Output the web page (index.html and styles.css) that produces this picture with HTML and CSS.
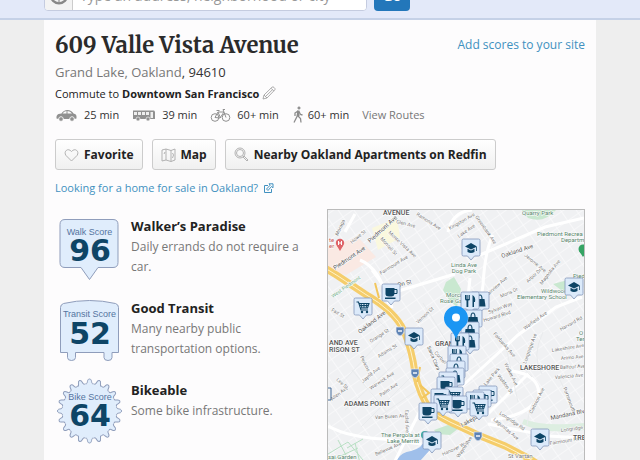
FILE: index.html
```html
<!DOCTYPE html>
<html lang="en">
<head>
<meta charset="utf-8">
<meta name="viewport" content="width=device-width, initial-scale=1">
<title>609 Valle Vista Avenue</title>
<link rel="stylesheet" href="styles.css">
</head>
<body>
<header class="topbar">
  <form class="search">
    <div class="field">
      <button class="locate" type="button" aria-label="Use my location">
        <svg width="20" height="20" viewBox="0 0 18 18" fill="none" stroke="#888" stroke-width="2"><circle cx="9" cy="9" r="7.5"/><path d="M9 2v4M9 12v4M2 9h4M12 9h4" stroke-width="1"/></svg>
      </button>
      <input class="query" type="text" aria-label="Location" placeholder="Type an address, neighborhood or city">
    </div>
    <button class="go" type="submit">Go</button>
  </form>
</header>
<main class="page">
  <div class="heading">
    <h1>609 Valle Vista Avenue</h1>
    <a class="link" href="#">Add scores to your site</a>
  </div>
  <p class="place"><a href="#">Grand Lake, Oakland</a>, 94610</p>
  <p class="commute">Commute to <b>Downtown San Francisco</b>
    <svg width="14" height="14" viewBox="0 0 14 14" fill="none" stroke="#999" stroke-width=".8"><path d="M1 13l1-4L10 1.200q1-.8 2 .2l.8.900q.7.900-.1 1.700L5 12z M2 9l3 3M9 2.200l2.900 2.900M3.500 10.500L10.500 3.700"/></svg>
  </p>
  <ul class="times">
    <li><svg width="23" height="14" viewBox="0 0 22 14"><path fill="#909090" d="M1 10.500Q.5 7 3 6l3-.5Q8 2 12 2q4 0 6 3.500 3 .5 3 3v2l-2 .5a2.500 2.500 0 0 0-5 0H8a2.500 2.500 0 0 0-5 0z"/><path fill="#fbfbfb" d="M7 5.500Q8.500 3 11 3v2.500zM12 3q3 0 4.500 2.500H12z"/><g fill="#909090" stroke="#fbfbfb" stroke-width=".6"><circle cx="5.500" cy="11" r="2.200"/><circle cx="16.500" cy="11" r="2.200"/></g></svg>25 min</li>
    <li><svg width="24" height="14" viewBox="0 0 24 14"><path fill="#909090" d="M1 2.500h21l1 1V11H1z"/><path fill="#eee" d="M2 4h3v3H2zM6 4h3v3H6zM10 4h3v3h-3zM14 4h3v3h-3zM18.500 4H21v6h-2.500z"/><g fill="#909090" stroke="#fff" stroke-width=".6"><circle cx="6" cy="11" r="2"/><circle cx="16" cy="11" r="2"/></g></svg>39 min</li>
    <li><svg width="21" height="14" viewBox="0 0 21 14" fill="none" stroke="#909090"><circle cx="5" cy="9.500" r="3.800"/><circle cx="16" cy="9.500" r="3.800"/><path d="M5 9.500l3-5.500h6l-4 6zM8 4l2.500 6M16 9.500L13 1.500h2M6.500 2.500h3"/></svg>60+ min</li>
    <li class="walk"><svg width="12" height="18" viewBox="0 0 12 18" fill="none" stroke="#8c8c8c" stroke-width="1.300"><circle cx="7" cy="2" r="1.100" fill="#8c8c8c" stroke-width="1"/><path d="M6 5L5 10.500 2 16.500M6 10l2.500 2.500.5 4M6 5L3 7v3M7 5.500L8.500 8.500l2 .5"/><path d="M6.300 4.500v5.500" stroke-width="2.400"/></svg>60+ min</li>
    <li><a href="#">View Routes</a></li>
  </ul>
  <div class="actions">
    <button type="button"><svg width="15" height="14" viewBox="0 0 15 14" fill="none" stroke="#aaa" stroke-width=".9"><path d="M7.500 13L2 7.500C-.8 4 3.500-1 7.500 3.500 11.500-1 15.800 4 13 7.500z"/></svg>Favorite</button>
    <button type="button"><svg width="15" height="14" viewBox="0 0 15 14" fill="none" stroke="#aaa" stroke-width=".9"><path d="M1 2l4-1v11l-4 1zM5 1l5 1.500v11L5 12M10 2.500l4-1.500v11l-4 1.500M3 6l1-2M11.500 5l1 2-1 3"/></svg>Map</button>
    <button type="button"><svg width="15" height="15" viewBox="0 0 15 15" fill="none" stroke="#aaa" stroke-width=".9"><circle cx="6" cy="6" r="5"/><circle cx="6" cy="6" r="3.500"/><path d="M9 10l1-1 4 4-1 1z"/></svg>Nearby Oakland Apartments on Redfin</button>
  </div>
  <p class="sale"><a class="link" href="#">Looking for a home for sale in Oakland?
    <svg width="11" height="11" viewBox="0 0 11 11" fill="none" stroke="#4191c0"><path d="M5 2.500H1.500v7h7V6M6 .8h4v4L8.500 3.500 5 7.500 3.500 6 7.200 2.200z"/></svg></a></p>
  <div class="columns">
    <section class="scores">
      <article>
        <svg class="badge" width="70" height="72" viewBox="55 212 70 72"><path d="M65 219.500h48q5 0 5 5v38q0 5-5 5h-15L89.500 279.500 81 267.500H65q-5 0-5-5v-38q0-5 5-5z"/><text class="kind" x="89.500" y="235">Walk Score</text><text class="value" x="90" y="261">96</text></svg>
        <div><h2>Walker’s Paradise</h2><p>Daily errands do not require a car.</p></div>
      </article>
      <article>
        <svg class="badge" width="70" height="72" viewBox="55 294 70 72"><path d="M60.500 352.500v-45q0-3 3-4 26-6 52 0 3 1 3 4v45h-6.500v5q0 3-4 3t-4-3v-5h-28.500v5q0 3-4 3t-4-3v-5z"/><text class="kind" x="89.500" y="317">Transit Score</text><text class="value" x="90" y="344">52</text></svg>
        <div><h2>Good Transit</h2><p>Many nearby public transportation options.</p></div>
      </article>
      <article>
        <svg class="badge" width="70" height="72" viewBox="55 376 70 72">
          <defs><path id="tooth" d="M-4.100-27.200C-1-26.500-3.200-32 0-32S1-26.500 4.100-27.200"/><g id="teeth"><use href="#tooth"/><use href="#tooth" transform="rotate(18)"/><use href="#tooth" transform="rotate(36)"/><use href="#tooth" transform="rotate(54)"/><use href="#tooth" transform="rotate(72)"/></g></defs>
          <g transform="translate(89.500 411)"><circle r="27.500" class="disc"/><use href="#teeth"/><use href="#teeth" transform="rotate(90)"/><use href="#teeth" transform="rotate(180)"/><use href="#teeth" transform="rotate(270)"/></g>
          <text class="kind" x="90" y="400">Bike Score</text><text class="value" x="90" y="426">64</text></svg>
        <div><h2>Bikeable</h2><p>Some bike infrastructure.</p></div>
      </article>
    </section>
    <svg class="map" viewBox="328 210 256 260" preserveAspectRatio="xMidYMin slice" role="img" aria-label="Map of the neighborhood">
      <defs>
        <pattern id="blocks" width="13" height="11" patternUnits="userSpaceOnUse" patternTransform="rotate(-35)"><path d="M0 0H13M0 0V11" stroke="#fafafb" stroke-width="1.600"/></pattern>
        <g id="pin"><path d="M-7.500-9H7.500Q9-9 9-7.500V6.500Q9 8 7.500 8H3.500L0 12-3.500 8H-7.500Q-9 8-9 6.500V-7.500Q-9-9-7.500-9z" fill="#dceafa" stroke="#8397ba" stroke-width=".8"/></g>
        <g id="school"><use href="#pin"/><path d="M-6-1.500L0-5 6-1.500 0 1.500z M-3.500.8L0 2.600 3.500.8V4Q0 6-3.500 4z M5-1h.8v4H5z" fill="#0e4566"/></g>
        <g id="cup"><use href="#pin"/><path d="M-5.500-5H3.500V1Q3 3.500.5 3.500H-2Q-5.500 3.500-5.500 1zM-6 4.500H4.500V6H-6z" fill="#0e4566"/><path d="M3-3.500h3v4H3" fill="none" stroke="#0e4566"/></g>
        <g id="cart"><use href="#pin"/><path d="M-6.500-5h2L-2 3H5M-4-3.500H6L4.500 1h-7M-2-3.500l1 4.500M1-3.500V1M4-3.500L3 1M-3.500-1.500h9" fill="none" stroke="#0e4566" stroke-width="1.100"/><circle cx="-1" cy="5" r="1.200" fill="#0e4566"/><circle cx="4" cy="5" r="1.200" fill="#0e4566"/></g>
        <g id="food"><use href="#pin"/><path d="M-5-6v4q0 1.500 1.500 1.500V6h1.800V-.5Q0-.5 0-2v-4h-.8v4h-.8v-4h-1v4h-.8v-4zM2.500-6Q6-4 5 1H4v5H2.500z" fill="#0e4566"/></g>
        <g id="bag"><use href="#pin"/><path d="M-4.500-2h9L5.500 5.500h-11z" fill="#0e4566"/><path d="M-2-2q0-4 2-4t2 4" fill="none" stroke="#0e4566" stroke-width="1.100"/></g>
        <g id="shield"><path d="M-4-4H4V1Q3 4 0 5-3 4-4 1z" fill="#5e83b5" stroke="#e9eef5" stroke-width=".7"/><path d="M-2 0h4" stroke="#fff" stroke-width="1.400"/></g>
      </defs>
      <rect x="320" y="200" width="280" height="290" fill="#f0f1f3"/>
      <rect x="320" y="200" width="280" height="290" fill="url(#blocks)"/>
      <path d="M328 247l30-10 18 20-30 18-18-5z" fill="#fae9e3"/>
      <path d="M372 228l25-10 3 20-22 12z" fill="#faf8de"/>
      <g fill="#c9e8d0"><path d="M446 282l8-5 7 12-4 18-8-7-6-10zM522 210h34q-12 14-28 8zM553 284l22-6 5 11-15 4zM434 430l14-5 11 3-9 7-13-1z"/><path d="M524 419q18 8 60 4v7q-40 5-62-6z" fill="#ddeee1"/></g>
      <path d="M396 461q5-9 15-10 12-3 14-12l4-3 7 5-7 10-9 10z" fill="#9fbfea"/>
      <g fill="none" stroke="#fff" stroke-width="3"><path d="M328 426q20 11 55 13l38 5M360 260q20 8 29 44M395 292l60-18M448 232q4-20 24-22M470 278l-4 38M493 235q-8 15-10 50-6 40-5 60M480 255l65-28 39-9M458 390l60-55 38-28 26-10M512 371q28 4 27 25-10 20-48 24M487 415l42-42M345 232l10-18M372 270q15 18 20 38M488 424l60 12 36 2M395 461l25-50"/></g>
      <g fill="none" stroke="#e9ebed"><path d="M352 370l35 42M400 320l-60 65M415 345l-70 65M421 367l-60 60M420 388l-40 28M410 350l-60-56M495 337l37 40M506 347l12 55M543 332q-12 25-1 42M540 395q-10 5-13 30M560 380l12 25M449 345l-26-42"/></g>
      <g fill="none" stroke="#b8dfc3"><path d="M328 454l20-12 15 18M338 440l10 19M347 448l16-9M330 461l28-13M355 443l5 20"/></g>
      <g class="freeway">
        <path id="freeway" d="M320 265L338 276 365 294Q395 311 404 331 412 350 415 373 420 396 430 409 437 416 450 422L478 435 505 446 530 459 550 472"/>
        <use href="#freeway" class="lane"/>
      </g>
      <path d="M375 283l4 15M420 385l9 8-7 5M417 382l3-15" fill="none" stroke="#f2c65c" stroke-width="2"/>
      <g class="street">
        <text transform="translate(338 236) rotate(-65)">Moraga</text>
        <text transform="translate(352 244) rotate(-40)">Howe St</text>
        <text transform="translate(396 223) rotate(14)">Glen Ave</text>
        <text transform="translate(388 233) rotate(43)">Monte Vista Ave</text>
        <text transform="translate(380 239) rotate(48)">Montell St</text>
        <text transform="translate(381 275) rotate(-32)">Fairmount Ave</text>
        <text transform="translate(416 215) rotate(33)">Ramona Ave</text>
        <text transform="translate(450 230) rotate(-30)">Kingston Ave</text>
        <text transform="translate(459 238) rotate(-35)">Lake Ave</text>
        <text transform="translate(475 217) rotate(55)">Greenbank Ave</text>
        <text transform="translate(524 256) rotate(39)">Jerome Ave</text>
        <text transform="translate(528 283) rotate(-42)">Arbor Dr</text>
        <text transform="translate(542 285) rotate(-52)">Magnolia Ave</text>
        <text transform="translate(487 297) rotate(-42)">Fairview Ave</text>
        <text transform="translate(501 298) rotate(-24)">Moris Dr</text>
        <text transform="translate(489 314) rotate(-21)">Sylvan Way</text>
        <text transform="translate(484 322) rotate(-17)">Howard Blvd</text>
        <text transform="translate(525 330) rotate(-36)">Warfield Ave</text>
        <text transform="translate(561 331) rotate(-29)">Harvard Rd</text>
        <text transform="translate(418 324) rotate(-43)">Vernon St</text>
        <text class="green" transform="translate(333 298) rotate(-35)">West Piedmont</text>
        <text transform="translate(331 311) rotate(30)">Fair St</text>
        <text transform="translate(371 343) rotate(-33)">Orange St</text>
        <text transform="translate(379 358) rotate(-32)">Adams St</text>
        <text transform="translate(360 357) rotate(64)">Perkins St</text>
        <text transform="translate(363 383) rotate(-39)">Jayne Ave</text>
        <text transform="translate(371 390) rotate(-34)">Warwick Ave</text>
        <text transform="translate(381 397) rotate(-35)">Palm Ave</text>
        <text transform="translate(332 401) rotate(-37)">Allen Ave</text>
        <text transform="translate(336 380) rotate(43)">Lee St</text>
        <text transform="translate(375 419) rotate(-3)">Van Buren Ave</text>
        <text transform="translate(405 410) rotate(88)">Euclid Ave</text>
        <text transform="translate(376 456) rotate(-24)">Bellevue Ave</text>
        <text class="dark" transform="translate(427 347) rotate(67)">Santa Clara</text>
        <text transform="translate(434 353) rotate(48)">Corbell</text>
        <text transform="translate(493 334) rotate(49)">Fairbanks Ave</text>
        <text transform="translate(504 364) rotate(63)">Walker Ave</text>
        <text transform="translate(526 364) rotate(-70)">Longridge Ave</text>
        <text transform="translate(497 376) rotate(53)">Weldon St</text>
        <text transform="translate(486 386) rotate(-50)">Lake Park</text>
        <text transform="translate(499 414) rotate(34)">Longridge Rd</text>
        <text transform="translate(493 420) rotate(40)">Lagunitas Ave</text>
        <text transform="translate(532 414) rotate(-63)">Carlston Ave</text>
        <text transform="translate(563 388) rotate(69)">Portsmouth</text>
        <text transform="translate(552 352) rotate(-9)">Lakeshore Ave</text>
        <text transform="translate(561 360) rotate(-5)">Arimo Ave</text>
        <text transform="translate(560 369) rotate(-3)">Balfour Ave</text>
        <text transform="translate(555 379) rotate(-5)">Valencia Ave</text>
        <text transform="translate(561 432) rotate(-8)">Longridge</text>
        <text transform="translate(550 445) rotate(-9)">Fairmount Rd</text>
        <text transform="translate(443 456) rotate(-25)">Hanover Way</text>
        <text transform="translate(459 458) rotate(-56)">Wayne Ave</text>
      </g>
      <g class="road">
        <text transform="translate(370 243) rotate(-42)">Piedmont Ave</text>
        <text transform="translate(335 270) rotate(-34)">Piedmont Ave</text>
        <text transform="translate(502 258) rotate(-18)">Oakland Ave</text>
        <text transform="translate(360 334) rotate(-38)">Oakland Ave</text>
        <text transform="translate(551 420) rotate(-12)">Mandana Blvd</text>
        <text transform="translate(462 427) rotate(-28)">Lakepark</text>
        <text transform="translate(398 287) rotate(-15)">On St</text>
      </g>
      <g class="area">
        <text x="383" y="215">AVENUE</text><text x="329" y="345">AND AVE</text><text x="329" y="352">RISON ST</text><text x="344" y="406">ADAMS POINT</text><text x="435" y="346">GRAND</text><text x="520" y="370">LAKESHORE</text><text x="573" y="440">TRE</text>
      </g>
      <g class="poi">
        <text x="522" y="215">Quarry Park</text><text x="537" y="236">Piedmont Recrea</text><text x="561" y="242">Departm</text><text x="464" y="267" text-anchor="middle">Linda Ave</text><text x="464" y="273" text-anchor="middle">Dog Park</text><text x="446" y="297">Morcom</text><text x="440" y="303">Rose Garden</text><text x="573" y="278">Pied</text><text x="541" y="293">Wildwood</text><text x="517" y="299">Elementary School</text><text x="381" y="437">The Pergola at</text><text x="387" y="443">Lake Merritt</text><text x="328" y="459">sai Garden</text><text x="579" y="335">O</text><text x="576" y="341">Ten</text>
        <text class="grey" x="508" y="458">St Vartan</text><text class="red" x="329" y="242">te</text><text class="red" x="329" y="248">er</text>
      </g>
      <circle cx="340" cy="243" r="4.200" fill="#df6469"/><path d="M337 246l3 5 3-5z" fill="#df6469"/><path d="M338.500 241v4M341.500 241v4M338.500 243h3" stroke="#fff"/>
      <circle cx="583" cy="249" r="4.500" fill="#36a464"/><path d="M579 251l4 6 4-6z" fill="#36a464"/>
      <circle cx="425" cy="435" r="4" fill="#39aaa0"/>
      <use href="#shield" x="400" y="331"/><use href="#shield" x="415" y="373"/><use href="#shield" x="478" y="436"/>
      <use href="#cup" x="391" y="293"/><use href="#cart" x="363" y="307"/><use href="#school" x="471" y="248"/><use href="#school" x="574" y="287"/>
      <use href="#school" x="414" y="337"/><path d="M328 388h3v12h-3" fill="none" stroke="#426b98"/>
      <use href="#bag" x="480" y="301"/><use href="#food" x="470" y="301"/>
      <use href="#food" x="462" y="320"/><use href="#bag" x="473" y="319"/><use href="#bag" x="470" y="331"/>
      <use href="#bag" x="470" y="342"/><use href="#food" x="460" y="342"/><use href="#food" x="457" y="355"/><use href="#bag" x="459" y="363"/><use href="#bag" x="456" y="370"/><use href="#bag" x="455" y="377"/><use href="#cart" x="448" y="381"/><use href="#cup" x="446" y="386"/>
      <use href="#cart" x="454" y="396"/><use href="#cup" x="440" y="398"/><use href="#cup" x="488" y="395"/><use href="#cup" x="482" y="399"/><use href="#food" x="475" y="401"/><use href="#cup" x="458" y="405"/><use href="#cart" x="443" y="404"/><use href="#cup" x="428" y="412"/><use href="#cart" x="479" y="408"/><use href="#school" x="432" y="441"/><use href="#school" x="540" y="438"/>
      <path d="M456 339Q453 331 447 326A12 12 0 1 1 465 326Q459 331 456 339z" fill="#1b96f3"/><circle cx="456" cy="317.500" r="4" fill="#fff"/>
    </svg>
  </div>
</main>
</body>
</html>
```
FILE: styles.css
```css
* { box-sizing: border-box; }

body {
  display: flex;
  flex-direction: column;
  height: 100vh;
  margin: 0;
  overflow: hidden;
  background: #eee;
  color: #333;
  font: 11px/18px "Open Sans", "Noto Sans", sans-serif;
}

h1, h2, p, ul { margin: 0; padding: 0; }
a { color: #777; text-decoration: none; }
button, input { font-family: inherit; }
svg { flex: none; }

.topbar {
  flex: none;
  display: flex;
  justify-content: center;
  align-items: flex-end;
  height: 20px;
  padding: 0 44px 7px;
  overflow: hidden;
  background: #e3e9f9;
  border-bottom: 2px solid #c5d1e7;
}

.search { display: flex; gap: 7px; width: 100%; max-width: 552px; }

.field {
  display: flex;
  width: 323px;
  height: 32px;
  border: 1px solid #c5cce0;
  border-radius: 4px;
  overflow: hidden;
  background: #fff;
}

.locate {
  display: flex;
  align-items: center;
  justify-content: center;
  width: 28px;
  padding: 0;
  border: 0;
  border-right: 1px solid #ccc;
  background: #f3f3f3;
}

.query {
  flex: 1;
  min-width: 0;
  padding: 0 7px;
  border: 0;
  font-size: 14px;
}

.query::placeholder { color: #999; }

.go {
  width: 36px;
  padding: 0;
  border: 0;
  border-radius: 4px;
  background: #2377ba;
  color: #fff;
  font-size: 14px;
  font-weight: 700;
}

.page {
  flex: 1;
  display: flex;
  flex-direction: column;
  width: calc(100% - 88px);
  max-width: 900px;
  min-height: 0;
  margin: 0 auto;
  padding: 8px 11px 0;
  background: #fdfcfd;
}

.heading { display: flex; justify-content: space-between; align-items: center; height: 34px; }

h1 {
  color: #2b2b2b;
  font: 700 22px/32px Merriweather, "Liberation Serif", serif;
}

.link { color: #4191c0; }
.heading .link { font-size: 12px; }

.place { font-size: 13px; line-height: 20px; }
.commute { line-height: 23px; color: #222; }
.commute svg { vertical-align: -2px; }

.times {
  display: flex;
  align-items: center;
  gap: 13px;
  height: 20px;
  list-style: none;
}

.times li { display: flex; align-items: center; gap: 6px; }
.times .walk { gap: 4px; }

.actions { display: flex; gap: 9px; margin-top: 14px; }

.actions button {
  display: flex;
  align-items: center;
  gap: 5px;
  height: 31px;
  padding: 0 8px;
  border: 1px solid #ccc;
  border-radius: 3px;
  background: linear-gradient(#fff, #f0f0f0);
  color: #222;
  font-size: 12px;
  font-weight: 700;
}

.sale { margin-top: 9px; }
.sale svg { vertical-align: -2px; margin-left: 2px; }

.columns {
  flex: 1;
  display: flex;
  justify-content: space-between;
  gap: 20px;
  min-height: 0;
  margin-top: 12px;
}

.scores { flex: 1; padding-top: 3px; }
.scores article { display: flex; gap: 6px; height: 82px; }
.scores article div { padding-top: 3px; }
.scores h2 { color: #222; font-size: 13px; line-height: 22px; }
.scores p { color: #777; font-size: 12px; line-height: 20px; }

.badge { overflow: visible; fill: #e0edfc; stroke: #8f9dbb; }
.badge .disc { stroke: none; }
.badge text { stroke: none; text-anchor: middle; }
.badge .kind { fill: #55749f; font: 9px "Liberation Sans", sans-serif; }
.badge .value { fill: #0e4566; font: 700 30px "DejaVu Sans", sans-serif; }

.map { flex: none; width: 258px; height: 100%; border: 1px solid #bbb; border-bottom: 0; }
.map text { font-family: Roboto, sans-serif; paint-order: stroke; stroke: #fff; stroke-width: 1px; }
.freeway { fill: none; stroke: #f5cd6b; stroke-width: 7px; }
.freeway .lane { stroke: #fff3c9; stroke-width: 1px; }
#freeway { stroke-width: inherit; }
.street { fill: #777; font-size: 5px; }
.street .dark { fill: #555; }
.street .green { fill: #6dab88; }
.road { fill: #555; font-size: 6px; }
.area { fill: #555; font-size: 7px; font-weight: 500; }
.poi { fill: #55836a; font-size: 6px; }
.poi .grey { fill: #777; }
.poi .red { fill: #c4575a; }
```
